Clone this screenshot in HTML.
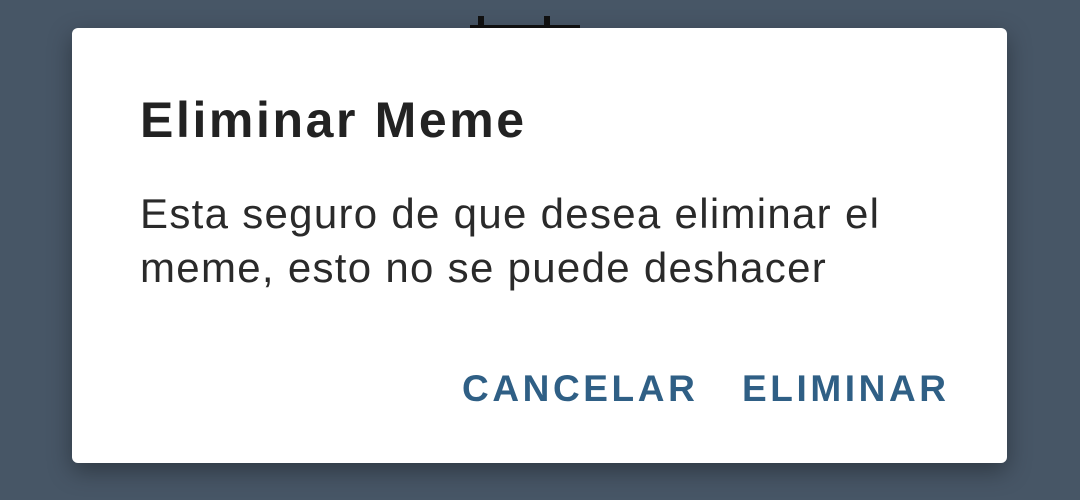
<!DOCTYPE html>
<html><head><meta charset="utf-8"><style>
html,body{margin:0;width:1080px;height:500px;overflow:hidden;background:#475666;font-family:"Liberation Sans",sans-serif}
.frag{position:absolute;background:#111}
.dlg{position:absolute;left:72px;top:28px;width:935px;height:435px;background:#fff;border-radius:6px;box-shadow:0 8px 24px rgba(0,0,0,.35)}
.t{position:absolute;left:68px;top:63px;font-size:50px;font-weight:bold;color:#222;white-space:nowrap;letter-spacing:2.6px}
.b{position:absolute;left:68px;top:159px;font-size:42px;line-height:54px;color:#2a2a2a;white-space:nowrap;letter-spacing:1.3px}
.btn{position:absolute;top:340px;font-size:37px;font-weight:bold;color:#2f5f85;letter-spacing:3.6px;white-space:nowrap}
</style></head><body>
<div class="frag" style="left:478px;top:16px;width:6px;height:12px"></div>
<div class="frag" style="left:544px;top:16px;width:6px;height:12px"></div>
<div class="frag" style="left:470px;top:25px;width:110px;height:3px"></div>
<div class="dlg">
<div class="t">Eliminar Meme</div>
<div class="b">Esta seguro de que desea eliminar el<br>meme, esto no se puede deshacer</div>
<div class="btn" style="left:390px">CANCELAR</div>
<div class="btn" style="left:670px">ELIMINAR</div>
</div>
</body></html>
